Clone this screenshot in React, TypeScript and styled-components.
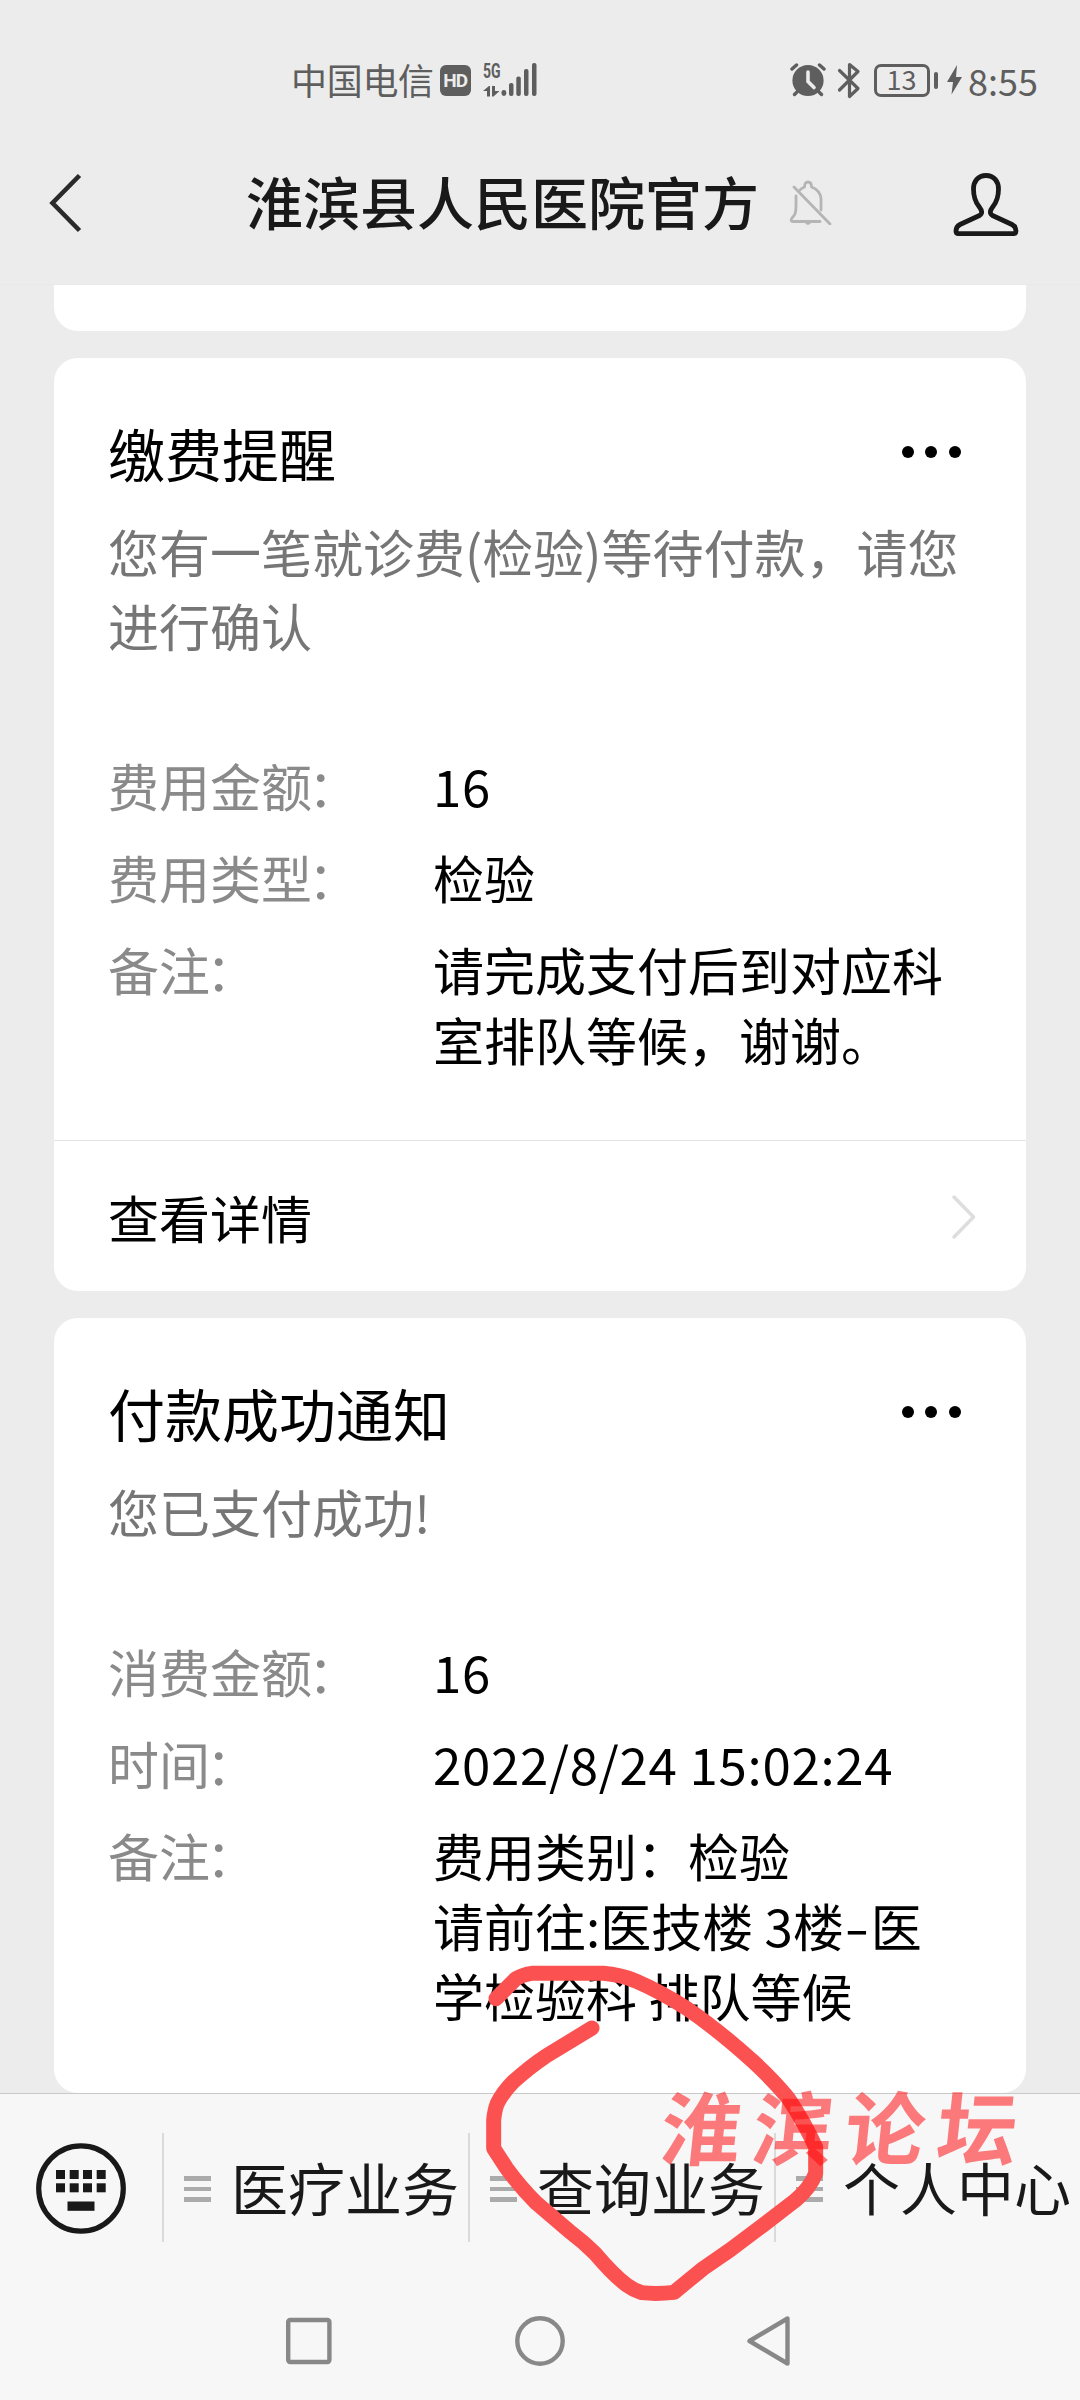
import React from "react";
import styled, { createGlobalStyle } from "styled-components";

const GlobalStyle = createGlobalStyle`
  * { box-sizing: border-box; }
  body { margin: 0; background: #ececec; }
`;

const Screen = styled.div`
  position: relative;
  display: flex;
  flex-direction: column;
  width: 1080px;
  height: 2400px;
  overflow: hidden;
  background: #ececec;
  color: #000;
  font-family: "Noto Sans CJK SC", "Noto Sans", sans-serif;
`;

const StatusBar = styled.div`
  display: flex;
  align-items: center;
  justify-content: space-between;
  height: 104px;
  padding: 56px 42px 0 291px;
  color: #5e5e5e;
`;

const StatusGroup = styled.div`
  display: flex;
  align-items: center;
  height: 48px;
`;

const Carrier = styled.span`
  font-size: 36px;
  line-height: 48px;
  margin-top: -3px;
  letter-spacing: -0.3px;
  margin-right: 6px;
`;

const HdBadge = styled.span`
  width: 31px;
  height: 31px;
  border-radius: 6px;
  background: #5e5e5e;
  color: #ececec;
  font: 700 19px/32px Roboto, sans-serif;
  text-align: center;
  letter-spacing: -0.8px;
  margin-right: 12px;
`;

const SignalBox = styled.div`
  display: flex;
  align-items: flex-end;
  height: 34px;
`;

const NetworkKind = styled.div`
  display: flex;
  flex-direction: column;
  justify-content: space-between;
  width: 18px;
  height: 34px;
`;

const NetworkLabel = styled.span`
  font: 700 20px/16px Roboto, sans-serif;
  transform: scaleX(0.7);
  transform-origin: left center;
`;

const Battery = styled.div`
  display: flex;
  align-items: center;
  margin: 0 9px 0 13px;
`;

const BatteryBody = styled.span`
  width: 56px;
  height: 33px;
  border: 3px solid #5e5e5e;
  border-radius: 7px;
  font-size: 27px;
  line-height: 24px;
  text-align: center;
`;

const BatteryTip = styled.span`
  width: 4px;
  height: 17px;
  margin-left: 4px;
  border-radius: 2px;
  background: #5e5e5e;
`;

const Clock = styled.span`
  font-size: 36px;
  line-height: 48px;
  letter-spacing: 0;
  margin: 0 0 0 6.5px;
`;

const Header = styled.header`
  display: flex;
  align-items: center;
  height: 181px;
  padding: 18px 61px 0 48px;
  border-bottom: 1px solid #e9e9e9;
`;

const Title = styled.h1`
  margin: -7px 29.5px 0 162px;
  font-size: 57px;
  line-height: 80px;
  font-weight: 500;
  color: #191919;
  white-space: nowrap;
`;

const BellSlot = styled.span`
  display: flex;
  margin-top: -2px;
`;

const ProfileSlot = styled.span`
  display: flex;
  margin: 2px 0 0 auto;
`;

const Messages = styled.main`
  display: flex;
  flex-direction: column;
  gap: 27px;
  height: 1808px;
  padding: 0 54px;
  overflow: hidden;
`;

const PreviousCard = styled.div`
  flex: none;
  height: 46px;
  border-radius: 0 0 24px 24px;
  background: #fff;
`;

const Card = styled.section`
  flex: none;
  border-radius: 24px;
  background: #fff;
`;

const CardBody = styled.div<{ $bottom: number }>`
  padding: 56px 54px ${(p) => p.$bottom}px;
`;

const CardHead = styled.div`
  display: flex;
  align-items: center;
  justify-content: space-between;
  padding-right: 11px;
`;

const CardTitle = styled.h2`
  margin: 0;
  font-size: 57px;
  line-height: 76px;
  font-weight: 400;
`;

const MoreButton = styled.span`
  display: flex;
  gap: 11.7px;
`;

const Dot = styled.i`
  width: 12px;
  height: 12px;
  border-radius: 50%;
  background: #000;
`;

const Description = styled.p`
  margin: 24px 0 88px;
  font-size: 51px;
  line-height: 74px;
  color: #767676;
  white-space: pre;
`;

const Fields = styled.dl`
  display: grid;
  grid-template-columns: 325px 1fr;
  row-gap: 22px;
  margin: 0;
  font-size: 51px;
  line-height: 70px;
`;

const FieldName = styled.dt`
  color: #8a8a8a;
`;

const Colon = styled.span`
  margin-left: -4px;
`;

const FieldValue = styled.dd<{ $spacing?: number }>`
  display: flex;
  flex-direction: column;
  margin: 0;
  white-space: pre;
  letter-spacing: ${(p) => p.$spacing ?? 0}px;
`;

const ValueLine = styled.span`
  display: flex;
  height: 70px;
`;

const Hyphen = styled.span`
  margin: 0 5px 0 4px;
  transform: scaleX(1.4);
`;

const DetailsLink = styled.div`
  display: flex;
  align-items: center;
  justify-content: space-between;
  height: 151px;
  padding: 1px 49px 0 54px;
  border-top: 1.5px solid #e4e4e4;
  font-size: 51px;
`;

const MenuBar = styled.nav`
  display: flex;
  align-items: flex-start;
  height: 186px;
  border-top: 1px solid #c9c9c9;
  background: #f7f7f7;
`;

const KeyboardSlot = styled.span`
  display: flex;
  width: 162px;
  padding: 49px 0 0 36px;
`;

const MenuItem = styled.div`
  display: flex;
  align-items: center;
  flex: none;
  width: 306px;
  height: 109px;
  margin-top: 39px;
  padding-left: 20px;
  border-left: 2px solid #dadada;
  font-size: 57px;
  line-height: 80px;
  color: #191919;
  white-space: nowrap;
`;

const MenuLines = styled.span`
  display: flex;
  flex-direction: column;
  gap: 6px;
  width: 27px;
  margin: 3px 20px 0 0;
`;

const MenuLine = styled.i`
  height: 4.4px;
  background: #ababab;
`;

const MenuText = styled.span`
  margin-top: -4px;
`;

const SystemNav = styled.div`
  display: flex;
  flex: 1;
  align-items: flex-start;
  padding: 36px 0 0 284px;
  background: #f7f7f7;
`;

const NavSlot = styled.span`
  display: flex;
  width: 231px;
`;

const Scribble = styled.svg`
  position: absolute;
  left: 470px;
  top: 1940px;
`;

const Watermark = styled.div`
  position: absolute;
  left: 662px;
  top: 2066px;
  font-size: 80px;
  line-height: 116px;
  font-weight: 700;
  letter-spacing: 12px;
  color: rgba(255, 10, 14, 0.53);
  transform: skewX(-6deg);
  white-space: nowrap;
`;

const SignalArrows = () => (
  <svg width="17" height="11" viewBox="0 0 17 11" fill="#5e5e5e">
    <path d="M0 5L6 0H7V10.500H4V5ZM9 0H12V5H16.500L10.500 10.500H9Z" />
  </svg>
);

const SignalBars = () => (
  <svg width="36" height="34" viewBox="0 0 36 34" fill="#5e5e5e">
    <rect x="0.500" y="27" width="4.800" height="6" rx="2.400" />
    <rect x="8" y="20" width="4.500" height="13" rx="2" />
    <rect x="15.300" y="13.500" width="4.500" height="19.500" rx="2" />
    <rect x="23" y="6" width="4.500" height="27" rx="2" />
    <rect x="31" y="0" width="4.500" height="33" rx="2" />
  </svg>
);

const AlarmIcon = () => (
  <svg width="36" height="34" viewBox="0 0 36 34" fill="none" stroke="#5e5e5e" strokeWidth="3.400" strokeLinecap="round">
    <circle cx="18" cy="17.500" r="15.600" fill="#5e5e5e" stroke="none" />
    <path d="M2 6L6.500 2M34 6L29.500 2M8 28L4.500 31.500M28 28L31.500 31.500" />
    <path d="M18 9V18.500L24 24.500" stroke="#ececec" strokeWidth="3.600" />
  </svg>
);

const BluetoothGlyph = styled.svg`
  margin-left: 11px;
`;

const BluetoothIcon = () => (
  <BluetoothGlyph width="24" height="37" viewBox="0 0 24 37" fill="none" stroke="#5e5e5e" strokeWidth="3.200" strokeLinecap="round" strokeLinejoin="round">
    <path d="M2.500 8.500L21 26.500L12.500 34.500V2.500L21 9.500L2.500 28" />
  </BluetoothGlyph>
);

const BoltIcon = () => (
  <svg width="15" height="30" viewBox="0 0 15 30" fill="#5e5e5e">
    <path d="M10 0L0 17H6L4.500 29.500L15 12H9Z" />
  </svg>
);

const BackIcon = () => (
  <svg width="36" height="60" viewBox="0 0 36 60" fill="none" stroke="#2a2a2a" strokeWidth="4.600">
    <path d="M31.500 2.500L4.500 30L31.500 57.500" />
  </svg>
);

const MutedBellIcon = () => (
  <svg width="43" height="45" viewBox="0 0 43 45" fill="none" stroke="#b5b5b5" strokeWidth="2.800" strokeLinecap="round" strokeLinejoin="round">
    <path d="M7 16V26C7 33 6 35 3 38C1.500 40 2 41.500 4 41.500H31M11 10C12 8.500 14 7.600 15.500 7C15.500 3.500 17 2 19 2S22.500 3.500 22.500 7C28.500 9 32 14 32 19V30" />
    <path d="M5 7L41 44" />
    <path d="M17 42Q19 45 21 42" />
  </svg>
);

const ProfileIcon = () => (
  <svg width="66" height="64" viewBox="0 0 66 64" fill="none" stroke="#191919" strokeWidth="4.800" strokeLinejoin="round">
    <path d="M33 3.500C25 3.500 20.500 9.500 20.500 17C20.500 25 22 29.500 26 34.500C29.500 39 29.500 41.500 26.500 43.500L7 52.500C3.500 54.200 3 56 3 59C3 61 4 61.700 6 61.700H60C62 61.700 63 61 63 59C63 56 62.500 54.200 59 52.500L39.500 43.500C36.500 41.500 36.500 39 40 34.500C44 29.500 45.500 25 45.500 17C45.500 9.500 41 3.500 33 3.500Z" />
  </svg>
);

const ChevronIcon = () => (
  <svg width="26" height="46" viewBox="0 0 26 46" fill="none" stroke="#dedede" strokeWidth="3.500" strokeLinecap="round" strokeLinejoin="round">
    <path d="M3 3L22.500 23L3 43" />
  </svg>
);

const KeyboardIcon = () => (
  <svg width="90" height="92" viewBox="0 0 90 92" fill="#191919">
    <ellipse cx="45" cy="45.500" rx="42.300" ry="42.600" fill="none" stroke="#191919" strokeWidth="5.200" />
    {[27, 40.3].map((y) => [20, 33.7, 47, 60.7].map((x) => <rect key={`${x}-${y}`} x={x} y={y} width="9" height="9" />))}
    <rect x="31.500" y="58.500" width="27" height="9.300" />
  </svg>
);

type Field = { name: string; lines: React.ReactNode[]; spacing?: number };

type Notice = {
  title: string;
  description: string;
  fields: Field[];
  link?: string;
  bottom: number;
};

const cards: Notice[] = [
  {
    title: "缴费提醒",
    description: "您有一笔就诊费(检验)等待付款，请您\n进行确认",
    fields: [
      { name: "费用金额", lines: ["16"], spacing: 0.6 },
      { name: "费用类型", lines: ["检验"] },
      { name: "备注", lines: ["请完成支付后到对应科", "室排队等候，谢谢。"] },
    ],
    link: "查看详情",
    bottom: 66,
  },
  {
    title: "付款成功通知",
    description: "您已支付成功!",
    fields: [
      { name: "消费金额", lines: ["16"], spacing: 0.6 },
      { name: "时间", lines: ["2022/8/24 15:02:24"], spacing: 0.7 },
      {
        name: "备注",
        lines: [
          "费用类别：检验",
          <>
            <span>请前往:医技楼 3楼</span>
            <Hyphen>-</Hyphen>
            <span>医</span>
          </>,
          "学检验科 排队等候",
        ],
      },
    ],
    bottom: 63,
  },
];

const menu = ["医疗业务", "查询业务", "个人中心"];

export default function App() {
  return (
    <Screen>
      <GlobalStyle />
      <StatusBar>
        <StatusGroup>
          <Carrier>中国电信</Carrier>
          <HdBadge>HD</HdBadge>
          <SignalBox>
            <NetworkKind>
              <NetworkLabel>5G</NetworkLabel>
              <SignalArrows />
            </NetworkKind>
            <SignalBars />
          </SignalBox>
        </StatusGroup>
        <StatusGroup>
          <AlarmIcon />
          <BluetoothIcon />
          <Battery>
            <BatteryBody>13</BatteryBody>
            <BatteryTip />
          </Battery>
          <BoltIcon />
          <Clock>8:55</Clock>
        </StatusGroup>
      </StatusBar>
      <Header>
        <BackIcon />
        <Title>淮滨县人民医院官方</Title>
        <BellSlot>
          <MutedBellIcon />
        </BellSlot>
        <ProfileSlot>
          <ProfileIcon />
        </ProfileSlot>
      </Header>
      <Messages>
        <PreviousCard />
        {cards.map((card) => (
          <Card key={card.title}>
            <CardBody $bottom={card.bottom}>
              <CardHead>
                <CardTitle>{card.title}</CardTitle>
                <MoreButton>
                  <Dot />
                  <Dot />
                  <Dot />
                </MoreButton>
              </CardHead>
              <Description>{card.description}</Description>
              <Fields>
                {card.fields.map((field) => (
                  <React.Fragment key={field.name}>
                    <FieldName>
                      {field.name}
                      <Colon>：</Colon>
                    </FieldName>
                    <FieldValue $spacing={field.spacing}>
                      {field.lines.map((line, index) => (
                        <ValueLine key={index}>{line}</ValueLine>
                      ))}
                    </FieldValue>
                  </React.Fragment>
                ))}
              </Fields>
            </CardBody>
            {card.link && (
              <DetailsLink>
                <span>{card.link}</span>
                <ChevronIcon />
              </DetailsLink>
            )}
          </Card>
        ))}
      </Messages>
      <MenuBar>
        <KeyboardSlot>
          <KeyboardIcon />
        </KeyboardSlot>
        {menu.map((label) => (
          <MenuItem key={label}>
            <MenuLines>
              <MenuLine />
              <MenuLine />
              <MenuLine />
            </MenuLines>
            <MenuText>{label}</MenuText>
          </MenuItem>
        ))}
      </MenuBar>
      <SystemNav>
        <NavSlot>
          <svg width="50" height="52" viewBox="0 0 50 52" fill="none" stroke="#888" strokeWidth="4.400">
            <rect x="4.200" y="5" width="41.200" height="42" rx="2" />
          </svg>
        </NavSlot>
        <NavSlot>
          <svg width="50" height="52" viewBox="0 0 50 52" fill="none" stroke="#888" strokeWidth="4.400">
            <circle cx="25" cy="26" r="22.700" />
          </svg>
        </NavSlot>
        <NavSlot>
          <svg width="46" height="52" viewBox="0 0 46 52" fill="none" stroke="#888" strokeWidth="4.400" strokeLinejoin="round">
            <path d="M41.500 3.500V48.500L3.500 26Z" />
          </svg>
        </NavSlot>
      </SystemNav>
      <Scribble width="400" height="380" viewBox="0 0 1200 1140" fill="none" stroke="#fc5151" strokeWidth="45" strokeLinecap="round" strokeLinejoin="round">
        <path d="M78 176L138 116Q160 103 185 100H400Q450 104 495 122Q570 154 650 205Q745 270 850 365Q910 420 955 475Q1005 550 1037 622V700Q1020 745 975 782L880 855L780 930L700 985L612 1057Q560 1063 515 1058Q490 1050 470 1035Q430 1005 375 940Q340 905 300 875L200 790Q150 740 110 685L71 625V540Q74 510 82 490Q100 455 130 425Q180 380 225 350L366 264" />
      </Scribble>
      <Watermark>淮滨论坛</Watermark>
    </Screen>
  );
}
